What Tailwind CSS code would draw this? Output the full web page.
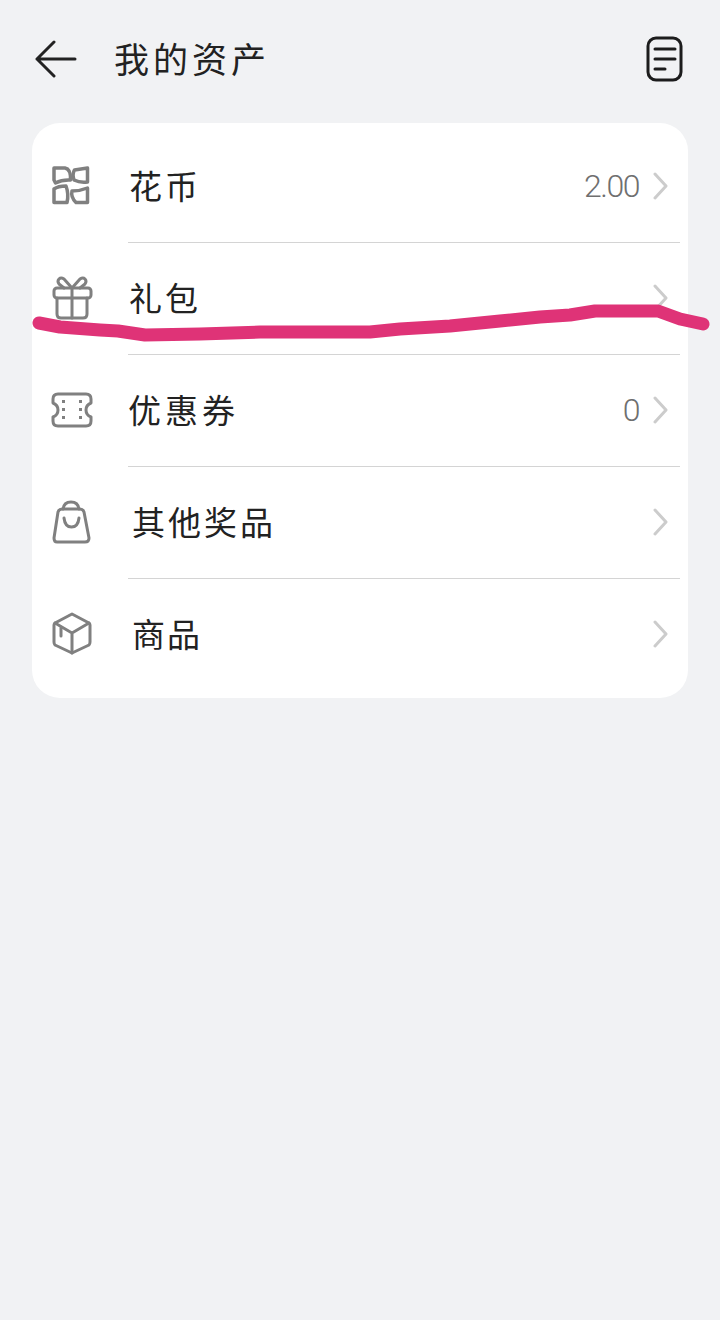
<!DOCTYPE html>
<html lang="zh-CN">
<head>
  <meta charset="UTF-8" />
  <meta name="viewport" content="width=device-width, initial-scale=1.0"/>
  <title>我的资产</title>
  <script src="https://cdn.jsdelivr.net/npm/@tailwindcss/browser@4"></script>
</head>
<body class="relative w-[720px] h-[1320px] overflow-hidden bg-[#f1f2f4] font-['Noto_Sans_CJK_SC','Noto_Sans',sans-serif] text-[#222]">
  <!-- header -->
  <header class="flex items-center h-[118px] pl-[35px] pr-[37px]">
    <svg class="w-[42px] h-[40px]" viewBox="0 0 42 40" fill="none" stroke="#222" stroke-width="3" stroke-linecap="round" stroke-linejoin="round">
      <path d="M19 3 L2 20 L19 37 M2 20 H40"/>
    </svg>
    <h1 class="ml-[37px] mb-[2px] text-[35px] leading-[44px] tracking-[4px] font-normal">我的资产</h1>
    <svg class="ml-auto w-[37px] h-[46px]" viewBox="0 0 37 46" fill="none" stroke="#1c1c1c" stroke-width="3" stroke-linecap="round">
      <rect x="2" y="2" width="33" height="42" rx="8"/>
      <path d="M9 13 H29 M9 23 H29 M9 33 H19"/>
    </svg>
  </header>

  <!-- list card -->
  <main class="mx-[32px] mt-[5px] h-[575px] pt-[8px] rounded-[28px] bg-white">
    <!-- row: 花币 -->
    <div class="flex h-[112px]">
      <div class="w-[96px] pl-[20px] pt-[33px]">
        <svg class="w-[44px] h-[44px] overflow-visible" viewBox="0 0 44 44" fill="none" stroke="#808080" stroke-width="3.5" stroke-linejoin="round">
          <path d="M2 4 H13 Q19 5 18.5 16 Q10 15.5 3.5 19 L2 16 Z"/>
          <path d="M35.5 4 V18 Q28 19 22 16 Q20 10 22.5 6 Z"/>
          <path d="M35.5 38.5 V24 Q28 27 20 27 Q18.5 33 24 38.5 Z"/>
          <path d="M2 38.5 V25 Q6 22 14 22 Q17 30 15 38.5 Z"/>
        </svg>
      </div>
      <div class="flex-1 mr-[8px] flex items-center border-b border-[#d4d4d4]">
        <span class="pl-[1px] mb-[2px] text-[33px] tracking-[3px]">花币</span>
        <span class="ml-auto mb-[2px] font-['Roboto',sans-serif] font-light text-[32px] tracking-[-1.5px] text-[#6f6f6f]">2.00</span>
        <svg class="ml-[14px] mr-[12px] mb-[2px] w-[15px] h-[28px]" viewBox="0 0 15 28" fill="none" stroke="#cccccc" stroke-width="3" stroke-linecap="round" stroke-linejoin="round"><path d="M2 2 L13 14 L2 26"/></svg>
      </div>
    </div>

    <!-- row: 礼包 -->
    <div class="flex h-[112px]">
      <div class="w-[96px] pl-[20px] pt-[33px]">
        <svg class="w-[44px] h-[44px] overflow-visible" viewBox="0 0 44 44" fill="none" stroke="#808080" stroke-width="3" stroke-linecap="round" stroke-linejoin="round">
          <rect x="2" y="12" width="37" height="10" rx="3"/>
          <path d="M5 22 V38 Q5 42 9 42 H31 Q35 42 35 38 V22"/>
          <path d="M20 12 V42"/>
          <path d="M20 12 L12 3 Q9 1 7 3 Q5 5 7 8 L12 12"/>
          <path d="M20 12 L28 3 Q31 1 33 3 Q35 5 33 8 L28 12"/>
        </svg>
      </div>
      <div class="flex-1 mr-[8px] flex items-center border-b border-[#d4d4d4]">
        <span class="pl-[1px] mb-[2px] text-[33px] tracking-[3px]">礼包</span>
        <svg class="ml-auto mr-[12px] mb-[2px] w-[15px] h-[28px]" viewBox="0 0 15 28" fill="none" stroke="#cccccc" stroke-width="3" stroke-linecap="round" stroke-linejoin="round"><path d="M2 2 L13 14 L2 26"/></svg>
      </div>
    </div>

    <!-- row: 优惠券 -->
    <div class="flex h-[112px]">
      <div class="w-[96px] pl-[20px] pt-[33px]">
        <svg class="w-[44px] h-[44px] overflow-visible" viewBox="0 0 44 44" fill="none" stroke="#808080" stroke-width="3" stroke-linecap="round" stroke-linejoin="round">
          <path d="M6 6 H34 Q39 6 39 11 V15 Q34 17 34 22 Q34 27 39 29 V33 Q39 38 34 38 H6 Q1 38 1 33 V29 Q6 27 6 22 Q6 17 1 15 V11 Q1 6 6 6 Z"/>
          <g fill="#808080" stroke="none">
            <rect x="10" y="12" width="3" height="3"/><rect x="10" y="20" width="3" height="3"/><rect x="10" y="28" width="3" height="3"/>
            <rect x="27" y="12" width="3" height="3"/><rect x="27" y="20" width="3" height="3"/><rect x="27" y="28" width="3" height="3"/>
          </g>
        </svg>
      </div>
      <div class="flex-1 mr-[8px] flex items-center border-b border-[#d4d4d4]">
        <span class="mb-[2px] text-[33px] tracking-[4px]">优惠券</span>
        <span class="ml-auto mb-[2px] font-['Roboto',sans-serif] font-light text-[32px] tracking-[-1.5px] text-[#6f6f6f]">0</span>
        <svg class="ml-[14px] mr-[12px] mb-[2px] w-[15px] h-[28px]" viewBox="0 0 15 28" fill="none" stroke="#cccccc" stroke-width="3" stroke-linecap="round" stroke-linejoin="round"><path d="M2 2 L13 14 L2 26"/></svg>
      </div>
    </div>

    <!-- row: 其他奖品 -->
    <div class="flex h-[112px]">
      <div class="w-[96px] pl-[20px] pt-[33px]">
        <svg class="w-[44px] h-[44px] overflow-visible" viewBox="0 0 44 44" fill="none" stroke="#808080" stroke-width="3" stroke-linecap="round" stroke-linejoin="round">
          <path d="M10 9 H28 Q31 9 32 12 L37 38 Q37 42 33 42 H5 Q2 42 2 38 L6 12 Q7 9 10 9 Z"/>
          <path d="M11 9 Q12 2 19 2 Q26 2 27 9"/>
          <path d="M12 18 Q13 27 19.5 27 Q26 27 27 18"/>
        </svg>
      </div>
      <div class="flex-1 mr-[8px] flex items-center border-b border-[#d4d4d4]">
        <span class="pl-[4px] mb-[2px] text-[33px] tracking-[3px]">其他奖品</span>
        <svg class="ml-auto mr-[12px] mb-[2px] w-[15px] h-[28px]" viewBox="0 0 15 28" fill="none" stroke="#cccccc" stroke-width="3" stroke-linecap="round" stroke-linejoin="round"><path d="M2 2 L13 14 L2 26"/></svg>
      </div>
    </div>

    <!-- row: 商品 -->
    <div class="flex h-[112px]">
      <div class="w-[96px] pl-[20px] pt-[33px]">
        <svg class="w-[44px] h-[44px] overflow-visible" viewBox="0 0 44 44" fill="none" stroke="#808080" stroke-width="3" stroke-linecap="round" stroke-linejoin="round">
          <path d="M20 2 L37 11 Q38 12 38 13 V30 Q38 32 37 33 L20 41 L3 33 Q2 32 2 30 V13 Q2 12 3 11 Z"/>
          <path d="M3 11 L20 21 L37 11 M20 21 V41"/>
          <path d="M9 16 V24"/>
        </svg>
      </div>
      <div class="flex-1 mr-[8px] flex items-center">
        <span class="pl-[4px] mb-[3px] text-[33px] tracking-[2px]">商品</span>
        <svg class="ml-auto mr-[12px] mb-[3px] w-[15px] h-[28px]" viewBox="0 0 15 28" fill="none" stroke="#cccccc" stroke-width="3" stroke-linecap="round" stroke-linejoin="round"><path d="M2 2 L13 14 L2 26"/></svg>
      </div>
    </div>
  </main>

  <!-- hand drawn pink line over the screenshot -->
  <svg class="absolute left-0 top-0 w-[720px] h-[1320px] pointer-events-none" viewBox="0 0 720 1320" fill="none">
    <path d="M39 323 L60 327 L100 330 L118 331 L145 335 L200 334 L260 332 L370 332 L400 329 L450 326 L500 321 L540 317 L570 315 L595 311 L658 311 L680 319 L703 324" stroke="#df3377" stroke-width="13" stroke-linecap="round" stroke-linejoin="round"/>
  </svg>
</body>
</html>
